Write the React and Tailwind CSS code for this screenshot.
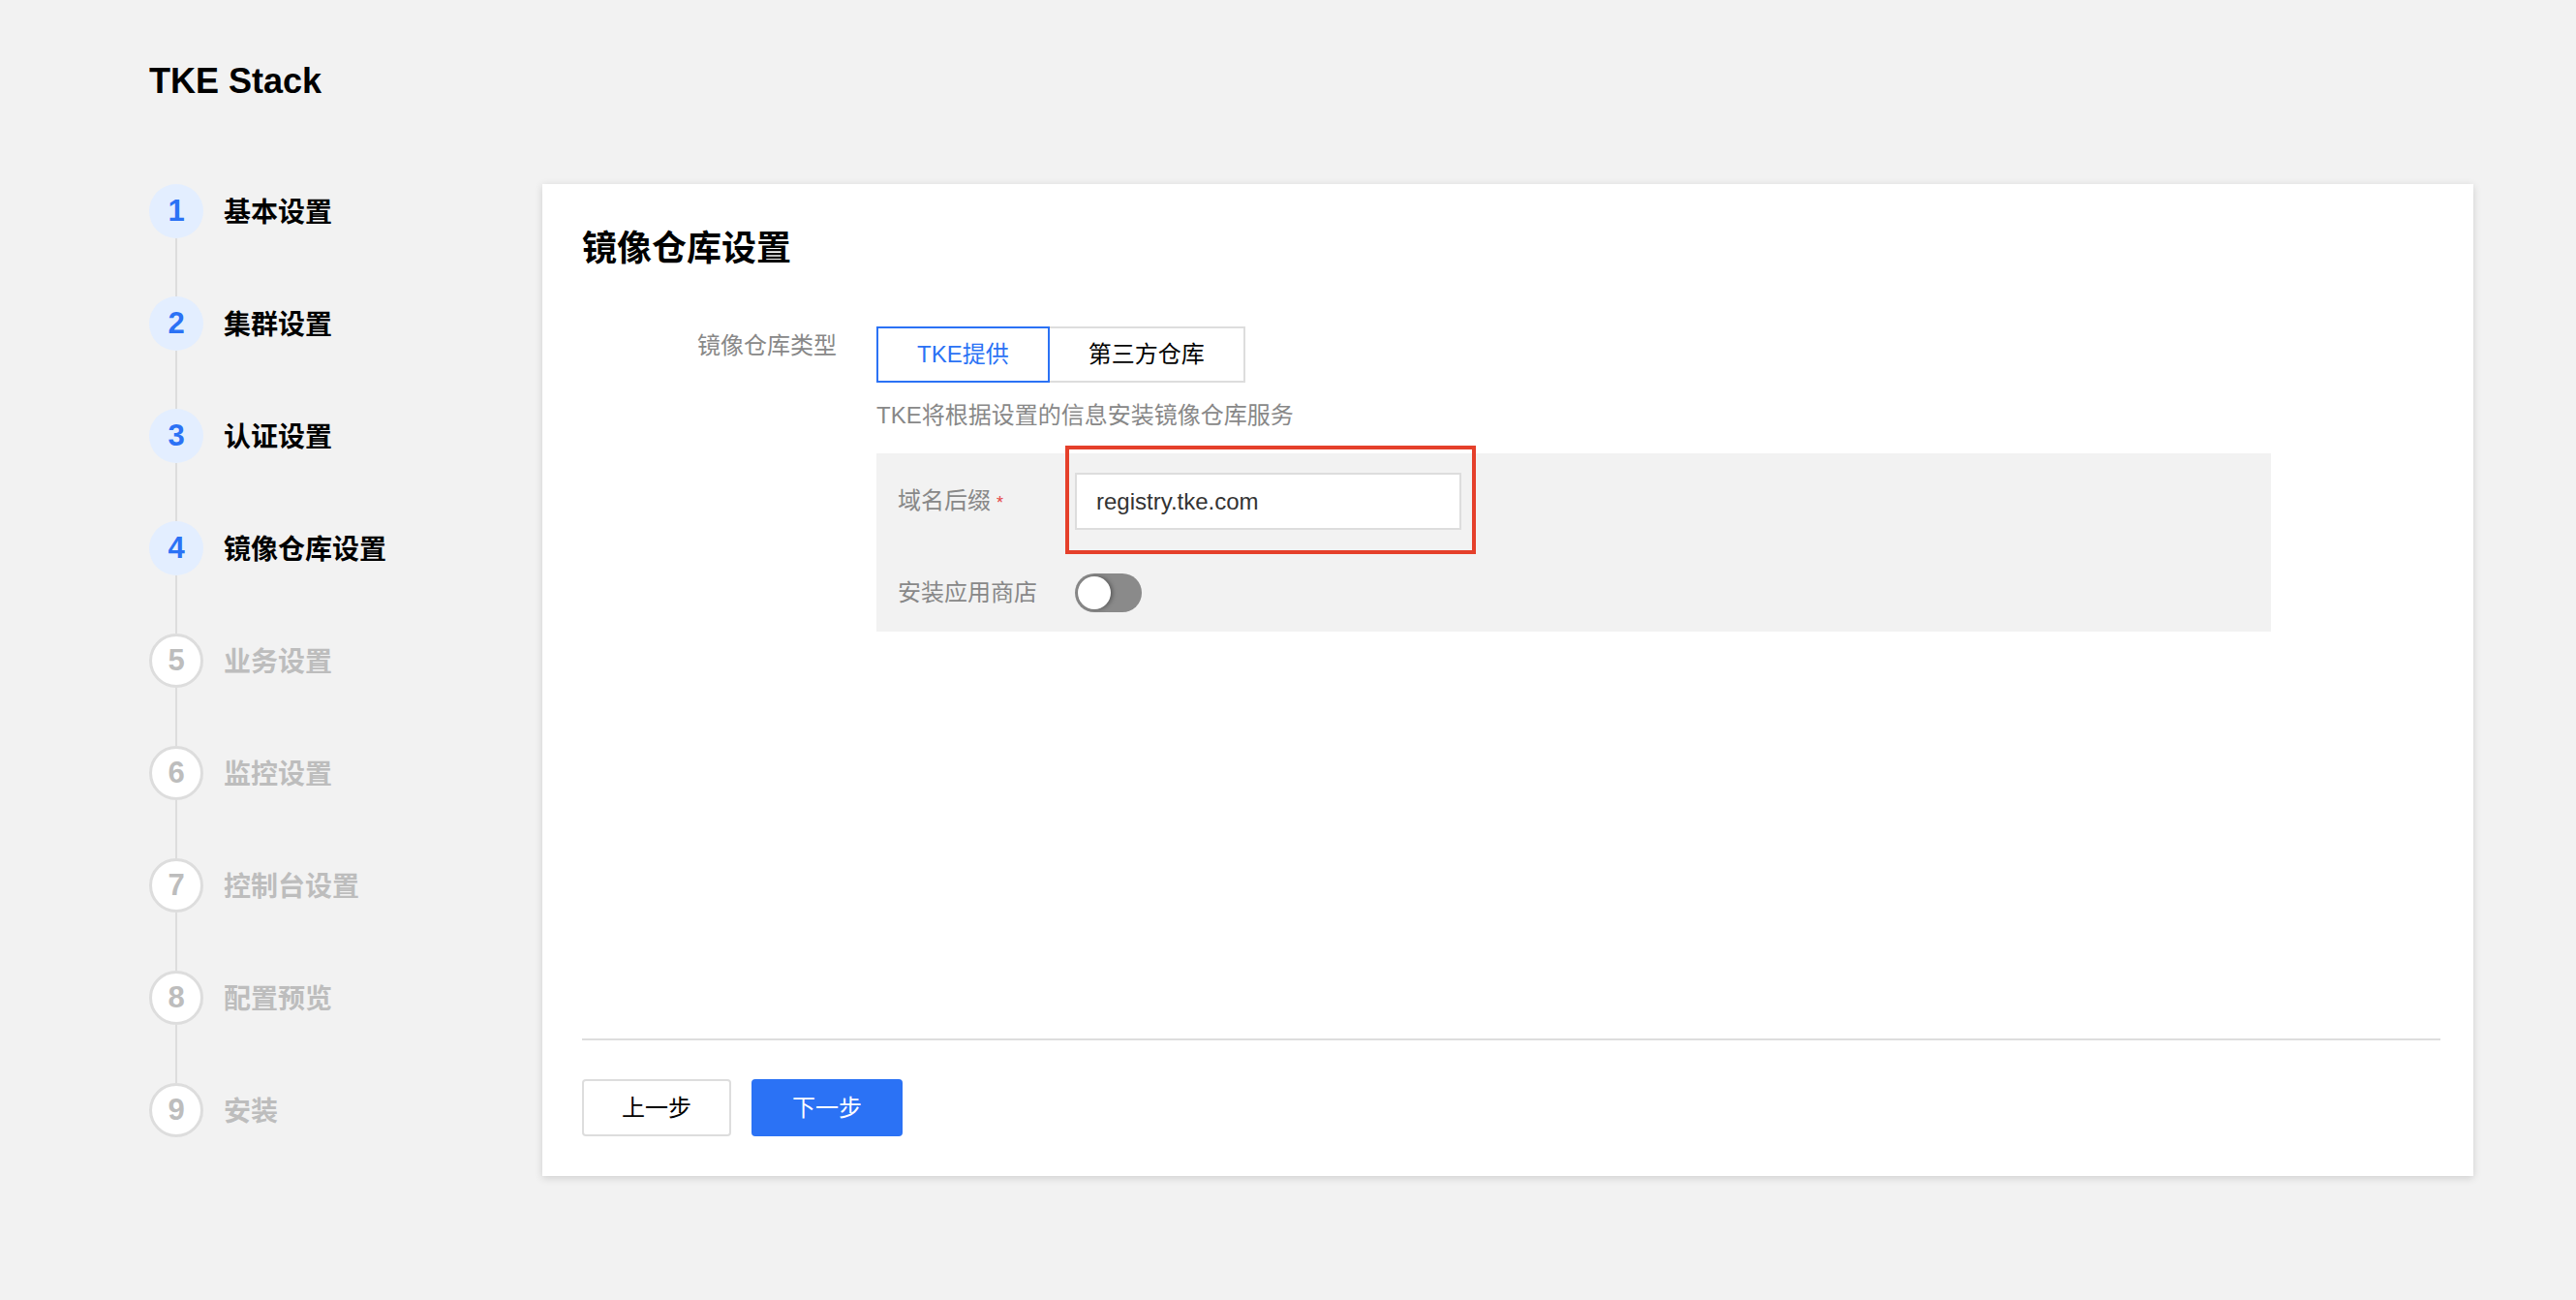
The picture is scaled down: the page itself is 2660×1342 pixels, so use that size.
import React from "react";

const steps = [
  { n: 1, label: "基本设置", done: true },
  { n: 2, label: "集群设置", done: true },
  { n: 3, label: "认证设置", done: true },
  { n: 4, label: "镜像仓库设置", done: true },
  { n: 5, label: "业务设置", done: false },
  { n: 6, label: "监控设置", done: false },
  { n: 7, label: "控制台设置", done: false },
  { n: 8, label: "配置预览", done: false },
  { n: 9, label: "安装", done: false },
];

function StepList() {
  return (
    <div className="w-[406px] shrink-0 flex flex-col">
      {steps.map((step, idx) => (
        <div key={step.n} className="flex flex-col">
          <div className="flex items-center">
            {step.done ? (
              <div className="w-14 h-14 rounded-full bg-[#e3eeff] flex items-center justify-center text-[31px] font-bold text-[#2b72f5]">
                {step.n}
              </div>
            ) : (
              <div className="w-14 h-14 rounded-full bg-white border-[3px] border-[#dddddd] flex items-center justify-center text-[31px] font-bold text-[#bdbdbd]">
                {step.n}
              </div>
            )}
            <span
              className={
                step.done
                  ? "ml-[21px] mt-[3px] text-[28px] font-bold leading-[40px] text-black"
                  : "ml-[21px] mt-[3px] text-[28px] font-bold leading-[40px] text-[#bdbdbd]"
              }
            >
              {step.label}
            </span>
          </div>
          {idx < steps.length - 1 ? (
            <div className="ml-[27px] w-[2px] h-[60px] bg-[#dddddd]" />
          ) : null}
        </div>
      ))}
    </div>
  );
}

function RegistryCard() {
  return (
    <div className="w-[1994px] h-[1024px] bg-white shadow-[0_2px_8px_rgba(0,0,0,0.15)] pt-[40px] pb-[41px] pl-[41px] pr-[34px] flex flex-col">
      <h1 className="text-[36px] font-bold leading-[54px] text-black">镜像仓库设置</h1>

      <div className="mt-[53px] flex">
        <div className="w-[304px] shrink-0 pr-[41px] pt-1 text-right text-[24px] leading-[32px] text-[#888888]">
          镜像仓库类型
        </div>
        <div className="flex flex-col">
          <div className="flex">
            <button className="h-[58px] px-[40px] border-2 border-[#2b72f5] bg-white text-[24px] text-[#2b72f5]">
              TKE提供
            </button>
            <button className="h-[58px] px-[40px] border-2 border-l-0 border-[#dddddd] bg-white text-[24px] text-black">
              第三方仓库
            </button>
          </div>
          <div className="mt-[18px] text-[24px] leading-[32px] text-[#888888]">
            TKE将根据设置的信息安装镜像仓库服务
          </div>

          <div className="mt-[23px] w-[1440px] bg-[#f2f2f2] pt-[20px] pb-[20px] pl-[22px] flex flex-col gap-[45px]">
            <div className="flex items-center">
              <div className="w-[183px] shrink-0 text-[24px] leading-[32px] text-[#888888]">
                域名后缀<span className="ml-[6px] text-[18px] text-[#e54545]">*</span>
              </div>
              <div className="relative">
                <div className="w-[399px] h-[59px] border-2 border-[#dddddd] bg-white pl-[20px] flex items-center text-[24px] text-[#333333]">
                  registry.tke.com
                </div>
                <div className="absolute -left-[10px] -top-[28px] -right-[15px] -bottom-[25px] border-4 border-[#e5402b] pointer-events-none" />
              </div>
            </div>
            <div className="flex items-center">
              <div className="w-[183px] shrink-0 text-[24px] leading-[32px] text-[#888888]">
                安装应用商店
              </div>
              <div className="w-[69px] h-[40px] rounded-full bg-[#8a8a8a] flex items-center pl-[3px]">
                <div className="w-[34px] h-[34px] rounded-full bg-white shadow-[2px_0_4px_rgba(0,0,0,0.35)]" />
              </div>
            </div>
          </div>
        </div>
      </div>

      <div className="mt-auto h-[2px] bg-[#dddddd]" />
      <div className="pt-[40px] flex gap-[21px]">
        <button className="w-[154px] h-[59px] rounded-[4px] border-2 border-[#dddddd] bg-white text-[24px] text-black">
          上一步
        </button>
        <button className="w-[156px] h-[59px] rounded-[4px] bg-[#2b72f5] text-[24px] text-white">
          下一步
        </button>
      </div>
    </div>
  );
}

export default function App() {
  return (
    <div className="min-h-screen w-full bg-[#f2f2f2] font-['Liberation_Sans','Noto_Sans_CJK_SC',sans-serif] pl-[154px] pt-[63px] pb-[128px]">
      <div className="text-[36px] font-bold leading-[42px] text-black">TKE Stack</div>
      <div className="mt-[85px] flex">
        <StepList />
        <RegistryCard />
      </div>
    </div>
  );
}
